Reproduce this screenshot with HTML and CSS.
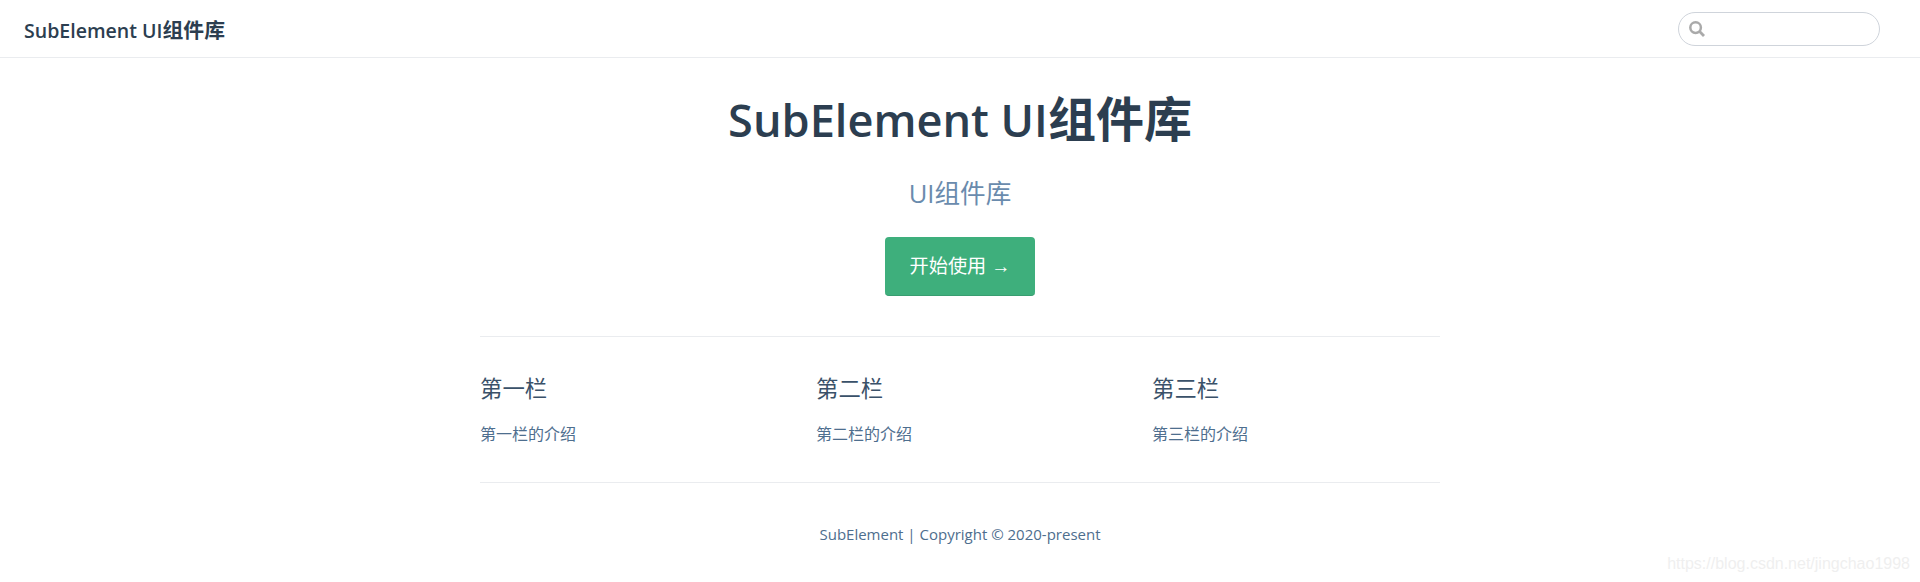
FILE: index.html
```html
<!DOCTYPE html>
<html lang="en">
<head>
    <meta charset="UTF-8">
    <meta name="viewport" content="width=device-width, initial-scale=1.0">
    <title>SubElement UI组件库</title>
    <link rel="stylesheet" href="styles.css">
</head>
<body>
    <!-- Top navbar -->
    <header class="navbar">
        <a class="site-name" href="#"><span class="latin">SubElement UI</span>组件库</a>
        <div class="search-box">
            <svg class="search-icon" viewBox="0 0 16 16" width="16" height="16">
                <circle cx="6.6" cy="6.6" r="5.3" fill="none" stroke="#aaa" stroke-width="2.5"/>
                <path d="M10.6 10.6L15 15" fill="none" stroke="#aaa" stroke-width="2.8"/>
            </svg>
            <input class="search-input" type="text" aria-label="Search">
        </div>
    </header>

    <main class="home">
        <section class="hero">
            <h1><span class="latin">SubElement UI</span>组件库</h1>
            <p class="description">UI组件库</p>
            <a class="action-button" href="#">开始使用 <span class="arrow">→</span></a>
        </section>

        <section class="features">
            <div class="feature">
                <h2>第一栏</h2>
                <p>第一栏的介绍</p>
            </div>
            <div class="feature">
                <h2>第二栏</h2>
                <p>第二栏的介绍</p>
            </div>
            <div class="feature">
                <h2>第三栏</h2>
                <p>第三栏的介绍</p>
            </div>
        </section>

        <footer class="footer">SubElement | Copyright © 2020-present</footer>
    </main>

    <div class="watermark">https://blog.csdn.net/jingchao1998</div>
</body>
</html>
```

FILE: styles.css
```css
body {
    margin: 0;
    height: 582px;
    overflow: hidden;
    background-color: #fff;
    color: #2c3e50;
    font-family: "Open Sans", "Noto Sans CJK SC", sans-serif;
    font-size: 16px;
}

a {
    text-decoration: none;
}

.latin {
    font-size: 0.94em;
    font-weight: 600;
}

.navbar {
    display: flex;
    align-items: center;
    justify-content: space-between;
    height: 57px;
    padding: 0 24px;
    border-bottom: 1px solid #eaecef;
}

.site-name {
    font-size: 20.8px;
    font-weight: 700;
    color: #2c3e50;
}

.search-box {
    position: relative;
    display: flex;
    margin-right: 16px;
}

.search-icon {
    position: absolute;
    left: 11px;
    top: 9px;
}

.search-input {
    box-sizing: border-box;
    width: 202px;
    height: 34px;
    padding: 0 10px 0 32px;
    border: 1px solid #cfd4db;
    border-radius: 32px;
    background: #fff;
    outline: none;
}

.home {
    width: 960px;
    margin: 0 auto;
}

.hero {
    text-align: center;
}

.hero h1 {
    margin: 30px 0 0;
    font-size: 48px;
    font-weight: 700;
    line-height: 62px;
}

.description {
    margin: 25px 0 0;
    font-size: 25.6px;
    line-height: 36px;
    color: #6a8bad;
}

.action-button {
    display: inline-block;
    box-sizing: border-box;
    width: 150px;
    margin-top: 25px;
    height: 59px;
    line-height: 58px;
    font-size: 19.2px;
    color: #fff;
    background-color: #3eaf7c;
    border-bottom: 1px solid #389d70;
    border-radius: 4px;
}

.arrow {
    font-family: "Liberation Sans", sans-serif;
}

.features {
    display: flex;
    justify-content: space-between;
    margin-top: 40px;
    padding: 24px 0 35px;
    border-top: 1px solid #eaecef;
    border-bottom: 1px solid #eaecef;
}

.feature {
    flex: 0 0 30%;
}

.feature h2 {
    margin: 12px 0 0;
    font-size: 22.4px;
    font-weight: 400;
    line-height: 32px;
    color: #3a5169;
}

.feature p {
    margin: 16px 0 0;
    line-height: 26px;
    font-size: 16px;
    color: #4e6e8e;
}

.footer {
    padding: 41px 0 0;
    text-align: center;
    font-size: 15px;
    color: #4e6e8e;
}

/* image host stamp, bottom right */
.watermark {
    position: absolute;
    right: 10px;
    bottom: 9px;
    font-family: "Liberation Sans", sans-serif;
    font-size: 16px;
    color: #efefef;
}
```
